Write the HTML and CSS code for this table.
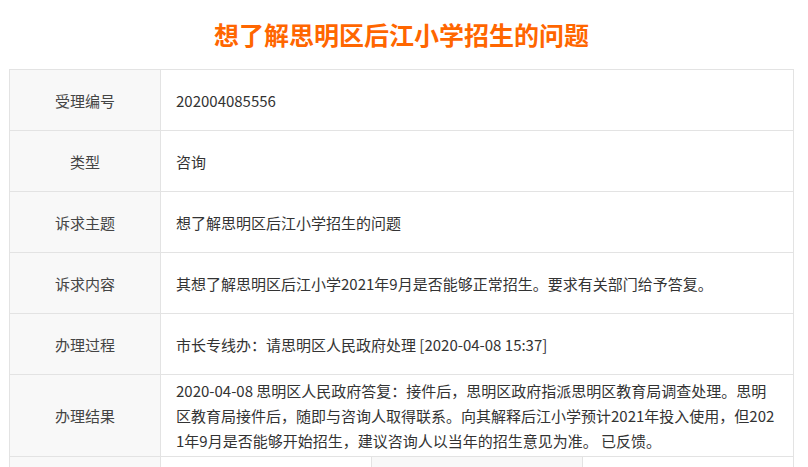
FILE: index.html
```html
<!DOCTYPE html>
<html lang="zh-CN">
<head>
    <meta charset="UTF-8">
    <meta name="viewport" content="width=device-width, initial-scale=1.0">
    <title>想了解思明区后江小学招生的问题</title>
    <link rel="stylesheet" href="styles.css">
</head>
<body>
<div class="container">
    <h1 class="title">想了解思明区后江小学招生的问题</h1>
    <table class="detail">
        <colgroup>
            <col class="col-label">
            <col class="col-val">
            <col class="col-val">
            <col class="col-val">
        </colgroup>
        <tr>
            <td class="label">受理编号</td>
            <td class="value" colspan="3">202004085556</td>
        </tr>
        <tr>
            <td class="label">类型</td>
            <td class="value" colspan="3">咨询</td>
        </tr>
        <tr>
            <td class="label">诉求主题</td>
            <td class="value" colspan="3">想了解思明区后江小学招生的问题</td>
        </tr>
        <tr>
            <td class="label">诉求内容</td>
            <td class="value" colspan="3">其想了解思明区后江小学2021年9月是否能够正常招生。要求有关部门给予答复。</td>
        </tr>
        <tr>
            <td class="label">办理过程</td>
            <td class="value" colspan="3">市长专线办：请思明区人民政府处理 [2020-04-08 15:37]</td>
        </tr>
        <tr>
            <td class="label">办理结果</td>
            <td class="value long" colspan="3">2020-04-08 思明区人民政府答复：接件后，思明区政府指派思明区教育局调查处理。思明区教育局接件后，随即与咨询人取得联系。向其解释后江小学预计2021年投入使用，但2021年9月是否能够开始招生，建议咨询人以当年的招生意见为准。 已反馈。</td>
        </tr>
        <tr>
            <td class="label">办理单位</td>
            <td class="value">思明区人民政府</td>
            <td class="label">办结时间</td>
            <td class="value">2020-04-10</td>
        </tr>
    </table>
</div>
</body>
</html>
```

FILE: styles.css
```css
body {
    margin: 0;
    font-family: "Noto Sans CJK SC", "Noto Sans", sans-serif;
    color: #333;
    background: #fff;
}
.container {
    width: 785px;
    margin-left: 9px;
}
.title {
    margin: 0;
    padding-top: 14px;
    margin-bottom: 15px;
    line-height: 40px;
    font-size: 25px;
    font-weight: bold;
    text-align: center;
    color: #f60;
}
.detail {
    width: 785px;
    border-collapse: collapse;
    table-layout: fixed;
    font-size: 15px;
    line-height: 25px;
}
.col-label {
    width: 151px;
}
.col-val {
    width: 211px;
}
.detail td {
    height: 61px;
    padding: 3px 15px;
    box-sizing: border-box;
    border: 1px solid #e3e3e3;
    vertical-align: middle;
}
.label {
    text-align: center;
    background-color: #f8f8f8;
    color: #444;
}
.value {
    background-color: #fff;
    color: #333;
}
.long {
    word-break: break-all;
}
```
